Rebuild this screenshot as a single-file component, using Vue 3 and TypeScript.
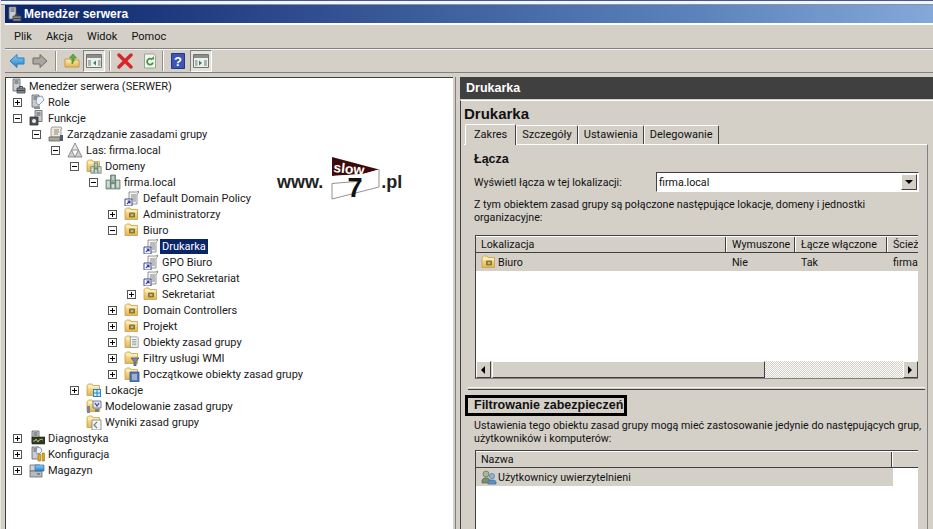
<script setup lang="ts">
type Row = { label: string; level: number; exp?: "+" | "-"; icon: string; selected?: boolean };

const rows: Row[] = [
  { label: "Menedżer serwera (SERWER)", level: 0, icon: "server" },
  { label: "Role", level: 1, exp: "+", icon: "roles" },
  { label: "Funkcje", level: 1, exp: "-", icon: "features" },
  { label: "Zarządzanie zasadami grupy", level: 2, exp: "-", icon: "scroll" },
  { label: "Las: firma.local", level: 3, exp: "-", icon: "forest" },
  { label: "Domeny", level: 4, exp: "-", icon: "domains" },
  { label: "firma.local", level: 5, exp: "-", icon: "domain" },
  { label: "Default Domain Policy", level: 6, icon: "gpo" },
  { label: "Administratorzy", level: 6, exp: "+", icon: "ou" },
  { label: "Biuro", level: 6, exp: "-", icon: "ou" },
  { label: "Drukarka", level: 7, icon: "gpo", selected: true },
  { label: "GPO Biuro", level: 7, icon: "gpo" },
  { label: "GPO Sekretariat", level: 7, icon: "gpo" },
  { label: "Sekretariat", level: 7, exp: "+", icon: "ou" },
  { label: "Domain Controllers", level: 6, exp: "+", icon: "ou" },
  { label: "Projekt", level: 6, exp: "+", icon: "ou" },
  { label: "Obiekty zasad grupy", level: 6, exp: "+", icon: "gpofolder" },
  { label: "Filtry usługi WMI", level: 6, exp: "+", icon: "wmi" },
  { label: "Początkowe obiekty zasad grupy", level: 6, exp: "+", icon: "starter" },
  { label: "Lokacje", level: 4, exp: "+", icon: "sites" },
  { label: "Modelowanie zasad grupy", level: 4, icon: "modeling" },
  { label: "Wyniki zasad grupy", level: 4, icon: "results" },
  { label: "Diagnostyka", level: 1, exp: "+", icon: "diag" },
  { label: "Konfiguracja", level: 1, exp: "+", icon: "config" },
  { label: "Magazyn", level: 1, exp: "+", icon: "storage" },
];

const menu = ["Plik", "Akcja", "Widok", "Pomoc"];
const tabs = ["Zakres", "Szczegóły", "Ustawienia", "Delegowanie"];
const columns = [
  { name: "Lokalizacja", width: 250 },
  { name: "Wymuszone", width: 68 },
  { name: "Łącze włączone", width: 91 },
  { name: "Ścieżka", width: 60 },
];

const indent = (level: number) => (level ? level * 19 - 12 : 4) + "px";
</script>

<template>
  <div class="window">
    <svg class="defs" width="0" height="0" aria-hidden="true">
      <defs>
        <linearGradient id="fold" x1="0" y1="0" x2="0" y2="1">
          <stop offset="0" stop-color="#fdf0b0" />
          <stop offset="1" stop-color="#e3b552" />
        </linearGradient>
        <linearGradient id="blue" x1="0" y1="0" x2="0" y2="1">
          <stop offset="0" stop-color="#8fd0f5" />
          <stop offset="1" stop-color="#1f7fd0" />
        </linearGradient>
        <symbol id="tower" viewBox="0 0 16 16">
          <path d="M3 1h7v12H3z" fill="#c9ccd0" stroke="#5d6268" stroke-width=".8" />
          <path d="M4.500 3h4M4.500 5h4" stroke="#4e545a" />
        </symbol>
        <symbol id="folder" viewBox="0 0 16 16">
          <path d="M1 13.500V3.500L2.500 2H6l1 1.500h6.500V13.500z" fill="url(#fold)" stroke="#c79f4a" stroke-width=".8" />
          <path d="M2 5h11" stroke="#fff6cf" />
        </symbol>
        <symbol id="page" viewBox="0 0 16 16">
          <path d="M5 1h8l1 1v11H5z" fill="#f6f6f2" stroke="#7d8188" stroke-width=".8" />
          <path d="M7 4h5M7 6h5M7 8h5M7 10h5" stroke="#8d9096" />
        </symbol>
        <symbol id="server" viewBox="0 0 16 16">
          <use href="#tower" width="16" height="16" />
          <path d="M7 10h8v5H7z" fill="#7f868c" stroke="#3f4448" stroke-width=".8" />
          <path d="M9.500 10V8.500h3V10M7 12.500h8" fill="none" stroke="#3f4448" />
        </symbol>
        <symbol id="roles" viewBox="0 0 16 16">
          <use href="#tower" width="16" height="16" />
          <path d="M8 3l5-1 2 4-5 5-3-2z" fill="#eef2f8" stroke="#7d8aa8" stroke-width=".8" />
          <path d="M5 13h6v2H5z" fill="#8a8f94" />
        </symbol>
        <symbol id="features" viewBox="0 0 16 16">
          <path d="M6 0.500h7v11H6z" fill="#c9ccd0" stroke="#5d6268" stroke-width=".8" />
          <path d="M7.500 3h4M7.500 5h4" stroke="#4e545a" />
          <path d="M1 7h8v8H1z" fill="#4f5357" stroke="#2e3134" stroke-width=".8" />
          <circle cx="5" cy="11" r="2" fill="#eee" />
        </symbol>
        <symbol id="scroll" viewBox="0 0 16 16">
          <path d="M4 1h9l1 1.500-1 .5v8H3V3z" fill="#efe9d8" stroke="#8c8a80" stroke-width=".8" />
          <path d="M6 4h5M6 6h5M6 8h4" stroke="#8a8a84" />
          <path d="M1 11h11v4H1z" fill="#a9a69c" stroke="#676660" stroke-width=".8" />
          <path d="M12 9h3v6h-3z" fill="#4b5a72" />
        </symbol>
        <symbol id="forest" viewBox="0 0 16 16">
          <path d="M8 1l3.500 7h-7z" fill="#e6e6e6" stroke="#777" stroke-width=".8" />
          <path d="M4.500 8L8 15H1z" fill="#cfcfcf" stroke="#777" stroke-width=".8" />
          <path d="M11.500 8L15 15H8z" fill="#cfcfcf" stroke="#777" stroke-width=".8" />
        </symbol>
        <symbol id="domainMark" viewBox="0 0 16 16">
          <path d="M5.500 1h5v8h-5z" fill="#8fa89a" stroke="#54705f" stroke-width=".7" />
          <path d="M1 6h4.500v9H1zM10.500 6H15v9h-4.500z" fill="#a9c2b2" stroke="#54705f" stroke-width=".7" />
          <path d="M6 9.500h4v5.500H6z" fill="#c2d4c8" stroke="#54705f" stroke-width=".7" />
          <path d="M2 8h2.500M2 10h2.500M2 12h2.500M11.500 8H14M11.500 10H14M11.500 12H14M7 3h2M7 5h2M7 12h2" stroke="#eef4f0" />
        </symbol>
        <symbol id="domains" viewBox="0 0 16 16">
          <use href="#folder" width="16" height="16" />
          <use href="#domainMark" x="4" y="4" width="12" height="12" />
        </symbol>
        <symbol id="domain" viewBox="0 0 16 16">
          <use href="#domainMark" width="16" height="16" />
        </symbol>
        <symbol id="gpo" viewBox="0 0 16 16">
          <path d="M5 2h8l1.500-1v2L13 4v10H5z" fill="#f4f4f0" stroke="#7b7e85" stroke-width=".8" />
          <path d="M7 5h5M7 7h5M7 9h5M9 11h3" stroke="#7f8289" />
          <path d="M1 9h7v7H1z" fill="#fff" stroke="#3a4a86" />
          <path d="M3 14l3-3M3.500 11H6v2.500" fill="none" stroke="#2a3a9c" stroke-width="1.100" />
        </symbol>
        <symbol id="ou" viewBox="0 0 16 16">
          <use href="#folder" width="16" height="16" />
          <path d="M5.500 7h5v4h-5z" fill="#9b8b3c" stroke="#6a5e28" stroke-width=".7" />
          <path d="M7 9h2" stroke="#f3ecb6" />
        </symbol>
        <symbol id="gpofolder" viewBox="0 0 16 16">
          <use href="#folder" width="16" height="16" />
          <use href="#page" y="2" width="14" height="14" x="2" />
        </symbol>
        <symbol id="wmi" viewBox="0 0 16 16">
          <use href="#folder" width="16" height="16" />
          <path d="M7 8h8l-3 3.500V16H10v-4.500z" fill="#7a8ba8" stroke="#465774" stroke-width=".8" />
        </symbol>
        <symbol id="starter" viewBox="0 0 16 16">
          <use href="#folder" width="16" height="16" />
          <path d="M6 6h9v10H6z" fill="#5479b4" stroke="#33507e" stroke-width=".8" />
          <path d="M8 9h5M8 11h5M8 13h5" stroke="#e4ecf7" />
        </symbol>
        <symbol id="sites" viewBox="0 0 16 16">
          <use href="#folder" width="16" height="16" />
          <path d="M7 7h8v8H7z" fill="#1f86cf" />
          <path d="M8 8h2.500v2.500H8zM11.500 8H14v2.500h-2.500zM8 11.500h2.500V14H8zM11.500 11.500H14V14h-2.500z" fill="#cfeafb" />
        </symbol>
        <symbol id="modeling" viewBox="0 0 16 16">
          <use href="#folder" width="16" height="16" />
          <path d="M7 3h8v7H7z" fill="#dfe5ee" stroke="#5c6a82" stroke-width=".8" />
          <path d="M9 5l2 3 2-3" fill="none" stroke="#3a3fa0" stroke-width="1.200" />
          <path d="M1 8h3v7H1z" fill="#808488" />
          <path d="M9 11h4v3H9z" fill="#7d8086" />
        </symbol>
        <symbol id="results" viewBox="0 0 16 16">
          <use href="#folder" width="16" height="16" />
          <path d="M6 6h9v10H6z" fill="#f4f4f2" stroke="#7c8086" stroke-width=".8" />
          <path d="M11 8L8 11l3 3" fill="none" stroke="#5e8478" stroke-width="1.100" />
        </symbol>
        <symbol id="diag" viewBox="0 0 16 16">
          <use href="#tower" width="16" height="16" />
          <path d="M3 7h13v7H3z" fill="#33382c" stroke="#1e211a" stroke-width=".6" />
          <path d="M4 11h2l1-2 2 3 1-2h1l1-1 2 1" fill="none" stroke="#b5d660" stroke-width=".9" />
        </symbol>
        <symbol id="config" viewBox="0 0 16 16">
          <use href="#tower" width="16" height="16" />
          <path d="M8 1l4 1 1 3-3 3-3-1z" fill="#eef2f8" stroke="#7d8aa8" stroke-width=".8" />
          <path d="M9 8h2.500v7H9zM13 7h2.500v8H13z" fill="#e2a81f" stroke="#96701b" stroke-width=".6" />
        </symbol>
        <symbol id="storage" viewBox="0 0 16 16">
          <path d="M1 3h10v6H1z" fill="#d0d3d6" stroke="#64696e" stroke-width=".8" />
          <path d="M1 9h12v6H1z" fill="#b7bbbf" stroke="#64696e" stroke-width=".8" />
          <path d="M6 3h9v6H6z" fill="url(#blue)" stroke="#3b6f9c" stroke-width=".7" />
          <path d="M8 12h3" stroke="#4a4e52" />
        </symbol>
        <symbol id="users" viewBox="0 0 16 16">
          <circle cx="5" cy="5" r="3" fill="#a8b69a" stroke="#5f6e55" stroke-width=".7" />
          <path d="M1 14v-3l2-2h4l2 2v3z" fill="#7b8f6f" stroke="#55654b" stroke-width=".7" />
          <circle cx="11" cy="7" r="2.600" fill="#8fb4d8" stroke="#4f7aa3" stroke-width=".7" />
          <path d="M7 15v-2.500L9 11h4l2 1.500V15z" fill="#5d8fc4" stroke="#3f6a99" stroke-width=".7" />
        </symbol>
      </defs>
    </svg>

    <div class="frame-top" />
    <div class="titlebar">
      <svg class="ic"><use href="#server" width="16" height="16" /></svg>
      <span>Menedżer serwera</span>
    </div>

    <nav class="menu">
      <span v-for="item in menu" :key="item">{{ item }}</span>
    </nav>

    <div class="toolbar">
      <svg class="tool back" viewBox="0 0 16 16">
        <path d="M1 8l7-6.500V5h7v6H8v3.500z" fill="url(#blue)" stroke="#2f7fbf" />
      </svg>
      <svg class="tool fwd" viewBox="0 0 16 16">
        <path d="M15 8L8 1.500V5H1v6h7v3.500z" fill="#a9a79f" stroke="#6f6d67" />
      </svg>
      <i class="sep first" />
      <svg class="tool up" viewBox="0 0 16 16">
        <path d="M1 14V6h5l1 1h8v7z" fill="url(#fold)" stroke="#c69a45" />
        <path d="M8 11V5L5.500 5 9 1l3.500 4H10v3z" fill="#5fae3c" stroke="#3e8426" stroke-width=".6" />
      </svg>
      <span class="pressed">
        <svg width="16" height="14" viewBox="0 0 16 14">
          <path d="M.5.500h15v13H.5z" fill="#eef0ea" stroke="#70746e" />
          <path d="M1 1h14v3H1z" fill="#8a8d88" />
          <path d="M2 6h3v6H2zM12 6h2.500v6H12z" fill="#a9b4b0" />
          <path d="M10 6.500L7 9l3 2.500z" fill="#3f7e6e" />
        </svg>
      </span>
      <i class="sep" />
      <svg class="tool del" viewBox="0 0 16 16">
        <path d="M2 2l12 12M14 2L2 14" stroke="#d8252a" stroke-width="3.400" stroke-linecap="round" />
      </svg>
      <svg class="tool refresh" viewBox="0 0 16 16">
        <path d="M2.500 1h9l2 2v12h-11z" fill="#f4f6ee" stroke="#9aa29a" />
        <path d="M11 9.500a3 3 0 1 1-.8-3" fill="none" stroke="#3f9b3f" stroke-width="1.800" />
        <path d="M8.500 6.500h3.500V3z" fill="#3f9b3f" />
      </svg>
      <i class="sep" />
      <svg class="tool help" viewBox="0 0 16 16">
        <path d="M1.500.500h13v15h-13z" fill="#3b55b8" stroke="#26397f" />
        <text x="8" y="13" text-anchor="middle" font-size="13" font-weight="700" fill="#fff" font-family="Liberation Sans, sans-serif">?</text>
      </svg>
      <span class="pressed second">
        <svg width="16" height="14" viewBox="0 0 16 14">
          <path d="M.5.500h15v13H.5z" fill="#eef0ea" stroke="#70746e" />
          <path d="M1 1h14v3H1z" fill="#8a8d88" />
          <path d="M2 6h2.500v6H2zM11 6h3v6h-3z" fill="#a9b4b0" />
          <path d="M6 6.500L9 9l-3 2.500z" fill="#3f7e6e" />
        </svg>
      </span>
    </div>

    <main class="main">
      <section class="tree">
        <div
          v-for="row in rows"
          :key="row.label"
          class="row"
          :style="{ paddingLeft: indent(row.level) }"
        >
          <span v-if="row.level" class="slot">
            <b v-if="row.exp" class="exp" :class="{ plus: row.exp === '+' }" />
          </span>
          <svg class="ic"><use :href="'#' + row.icon" width="16" height="16" /></svg>
          <span class="label" :class="{ sel: row.selected }">{{ row.label }}</span>
        </div>

        <div class="logo">
          <span class="logo-txt">www.</span>
          <svg class="logo-flag" width="50" height="48" viewBox="0 0 50 48">
            <path d="M1 1l47 12.500L32 18 1 20z" fill="#3c0a0a" />
            <text x="2" y="16" font-size="14" font-weight="700" fill="#fff" font-family="Liberation Sans, sans-serif" transform="rotate(6 2 16)">slow</text>
            <path d="M1 20l31-2 16-4.500v18L1 44z" fill="#fff" />
            <path d="M1 27.500V43L48 31V13" fill="none" stroke="#777" stroke-width=".8" />
            <path d="M1 27.500l30-2.500" fill="none" stroke="#777" stroke-width=".8" />
            <text x="24" y="41" font-size="27" font-weight="700" fill="#111" text-anchor="middle" font-family="Liberation Sans, sans-serif">7</text>
          </svg>
          <span class="logo-txt">.pl</span>
        </div>
      </section>

      <section class="side">
        <header class="side-head">Drukarka</header>
        <div class="pane">
          <h1>Drukarka</h1>
          <div class="tabs">
            <span v-for="(t, i) in tabs" :key="t" class="tab" :class="{ active: i === 0 }">{{ t }}</span>
          </div>
          <div class="page">
            <h2>Łącza</h2>
            <div class="combo-row">
              <span>Wyświetl łącza w tej lokalizacji:</span>
              <div class="combo">
                <span>firma.local</span>
                <i class="drop" />
              </div>
            </div>
            <p class="para">Z tym obiektem zasad grupy są połączone następujące lokacje, domeny i jednostki organizacyjne:</p>

            <div class="list top">
              <div class="list-head">
                <span v-for="c in columns" :key="c.name" class="col" :style="{ flexBasis: c.width + 'px' }">{{ c.name }}</span>
              </div>
              <div class="list-row">
                <span class="col" :style="{ flexBasis: columns[0].width + 1 + 'px' }">
                  <svg class="ic small"><use href="#ou" width="16" height="16" /></svg>Biuro
                </span>
                <span class="col" :style="{ flexBasis: columns[1].width + 1 + 'px' }">Nie</span>
                <span class="col" :style="{ flexBasis: columns[2].width + 1 + 'px' }">Tak</span>
                <span class="col" :style="{ flexBasis: columns[3].width + 'px' }">firma.local</span>
              </div>
              <div class="list-fill" />
              <div class="hscroll">
                <i class="sbtn left" />
                <i class="thumb" />
                <i class="hatch" />
                <i class="sbtn right" />
              </div>
            </div>

            <div class="divider" />

            <h2 class="boxed">Filtrowanie zabezpieczeń</h2>
            <p class="para second">Ustawienia tego obiektu zasad grupy mogą mieć zastosowanie jedynie do następujących grup, użytkowników i komputerów:</p>

            <div class="list bottom">
              <div class="list-head">
                <span class="col" style="flex-basis: 416px">Nazwa</span>
                <span class="col" style="flex-basis: 26px" />
              </div>
              <div class="list-row" style="width: 417px">
                <span class="col">
                  <svg class="ic small"><use href="#users" width="16" height="16" /></svg>Użytkownicy uwierzytelnieni
                </span>
              </div>
              <div class="list-fill" />
            </div>
          </div>
        </div>
      </section>
    </main>
  </div>
</template>

<style>
html,
body {
  margin: 0;
  overflow: hidden;
  background: #d4d0c8;
}
</style>

<style scoped>
.window {
  width: 933px;
  height: 529px;
  overflow: hidden;
  display: flex;
  flex-direction: column;
  background: #d4d0c8;
  font: 11px Roboto, "Liberation Sans", Arial, sans-serif;
  color: #111;
  border-left: 1px solid #e8e6e0;
  box-sizing: border-box;
  padding-left: 3px;
}
.defs {
  position: absolute;
}
.ic {
  width: 16px;
  height: 16px;
  flex: none;
}
.frame-top {
  height: 5px;
  flex: none;
  margin-left: -4px;
  box-sizing: border-box;
  border-top: 1px solid #3f5c8f;
  border-bottom: 1px solid #8f8fa8;
  background: #f2f4f6;
}
.titlebar {
  height: 18px;
  flex: none;
  display: flex;
  align-items: center;
  gap: 2px;
  margin-left: 1px;
  padding-left: 1px;
  background: linear-gradient(90deg, #0a246a 0%, #2c4a8c 30%, #5c84bc 75%, #84a8d8 100%);
  color: #fff;
  font: 700 12px "Liberation Sans", sans-serif;
}
.menu {
  height: 26px;
  flex: none;
  display: flex;
  align-items: center;
  box-sizing: border-box;
  margin-left: 1px;
  padding-left: 9px;
  gap: 14px;
  border-top: 2px solid #fff;
  border-bottom: 1px solid #808080;
}
.toolbar {
  height: 24px;
  flex: none;
  display: flex;
  align-items: center;
  box-sizing: border-box;
  margin-left: 1px;
  padding-left: 4px;
  border-top: 1px solid #f4f2ee;
  border-bottom: 1px solid #808080;
}
.tool {
  width: 16px;
  height: 16px;
  flex: none;
}
.fwd {
  margin-left: 7px;
}
.sep {
  width: 1px;
  height: 20px;
  background: #8f8f8a;
  border-right: 1px solid #fff;
  margin: 0 6px 0 4px;
  flex: none;
}
.sep.first {
  margin: 0 7px;
}
.up {
  margin-right: 3px;
}
.pressed {
  width: 22px;
  height: 22px;
  flex: none;
  display: flex;
  align-items: center;
  justify-content: center;
  box-sizing: border-box;
  background: #e4e2dc;
  border: 1px solid;
  border-color: #808080 #fff #fff #808080;
}
.pressed.second {
  margin-left: 4px;
}
.refresh {
  margin-left: 9px;
}
.main {
  flex: 1;
  min-height: 0;
  display: flex;
  margin-top: 4px;
  margin-left: 1px;
}
.tree {
  position: relative;
  width: 448px;
  flex: none;
  background: #fff;
  border-top: 1px solid #404040;
  border-left: 1px solid #404040;
  box-sizing: border-box;
  color: #1a1a1a;
}
.row {
  height: 16px;
  display: flex;
  align-items: center;
  white-space: nowrap;
}
.slot {
  width: 16px;
  flex: none;
  display: flex;
}
.exp {
  position: relative;
  width: 9px;
  height: 9px;
  box-sizing: border-box;
  border: 1px solid #555;
  background: #fff;
}
.exp::before {
  content: "";
  position: absolute;
  left: 1px;
  top: 3px;
  width: 5px;
  height: 1px;
  background: #000;
}
.exp.plus::after {
  content: "";
  position: absolute;
  left: 3px;
  top: 1px;
  width: 1px;
  height: 5px;
  background: #000;
}
.label {
  margin-left: 1px;
  padding: 0 2px;
  height: 15px;
  line-height: 15px;
}
.label.sel {
  background: #0a246a;
  color: #fff;
}
.logo {
  position: absolute;
  left: 271px;
  top: 78px;
  display: flex;
  align-items: flex-start;
  height: 48px;
}
.logo-flag {
  margin-left: 8px;
  flex: none;
}
.logo-txt {
  font: 700 18px "Liberation Sans", sans-serif;
  line-height: 20px;
  color: #222;
  margin-top: 16px;
}
.side {
  flex: 1;
  min-width: 0;
  margin-left: 2px;
  border-left: 1px solid #808080;
  padding-left: 4px;
  display: flex;
  flex-direction: column;
}
.side-head {
  height: 22px;
  flex: none;
  background: #404040;
  color: #fff;
  font: 700 12.5px/22px "Liberation Sans", sans-serif;
  padding-left: 6px;
}
.pane {
  flex: 1;
  min-height: 0;
  margin-top: 1px;
  border-top: 1px solid #fff;
  border-left: 1px solid #404040;
  padding: 4px 0 0 3px;
}
h1 {
  margin: 0;
  font: 700 15px/18px "Liberation Sans", sans-serif;
  color: #111;
}
.tabs {
  display: flex;
  height: 20px;
  align-items: flex-end;
  margin-top: 1px;
  padding-left: 1px;
}
.tab {
  height: 18px;
  line-height: 18px;
  padding: 0 5px;
  border: 1px solid;
  border-bottom: none;
  border-color: #fff #404040 transparent #fff;
  border-radius: 2px 2px 0 0;
  white-space: nowrap;
}
.tab.active {
  height: 20px;
  line-height: 20px;
  padding: 0 8px;
  position: relative;
  top: 1px;
  background: #d4d0c8;
}
.page {
  width: 464px;
  box-sizing: border-box;
  border-top: 1px solid #fff;
  border-right: 1px solid #808080;
  padding: 7px 0 0 10px;
  height: 400px;
  font-size: 10.7px;
}
h2 {
  margin: 0;
  font: 700 12.5px/14px "Liberation Sans", sans-serif;
}
.combo-row {
  display: flex;
  align-items: center;
  justify-content: space-between;
  width: 445px;
  margin-top: 6px;
  height: 20px;
}
.combo {
  width: 263px;
  height: 20px;
  box-sizing: border-box;
  border: 1px solid;
  border-color: #404040 #fff #fff #404040;
  background: #fff;
  display: flex;
  align-items: center;
  justify-content: space-between;
  padding-left: 2px;
}
.drop {
  width: 16px;
  height: 16px;
  margin-right: 1px;
  box-sizing: border-box;
  background: #d4d0c8;
  border: 1px solid;
  border-color: #fff #404040 #404040 #fff;
  position: relative;
}
.drop::after {
  content: "";
  position: absolute;
  left: 3px;
  top: 5px;
  border: 4px solid transparent;
  border-top: 4px solid #000;
  border-bottom: none;
}
.para {
  margin: 6px 0 0;
  width: 420px;
  line-height: 13px;
}
.para.second {
  margin-top: 3px;
  width: 450px;
}
.list {
  width: 443px;
  margin-left: 1px;
  box-sizing: border-box;
  border-top: 1px solid #404040;
  border-left: 1px solid #404040;
  background: #fff;
  display: flex;
  flex-direction: column;
  overflow: hidden;
}
.list.top {
  height: 144px;
  margin-top: 11px;
  border-bottom: 1px solid #808080;
}
.list.bottom {
  height: 90px;
  margin-top: 5px;
}
.list-head {
  display: flex;
  height: 17px;
  box-sizing: border-box;
  flex: none;
  background: #d4d0c8;
  border-top: 1px solid #fff;
  border-bottom: 1px solid #404040;
}
.col {
  flex: none;
  display: flex;
  align-items: center;
  box-sizing: border-box;
  padding-left: 5px;
  white-space: nowrap;
  overflow: hidden;
}
.list-head .col {
  border-right: 1px solid #404040;
  box-shadow: 1px 0 0 #fff;
  margin-right: 1px;
}
.list-row {
  display: flex;
  height: 18px;
  flex: none;
  background: #d4d0c8;
}
.small {
  margin-right: 1px;
}
.list-fill {
  flex: 1;
}
.hscroll {
  height: 17px;
  flex: none;
  display: flex;
  background: #d4d0c8;
}
.sbtn {
  width: 15px;
  flex: none;
  position: relative;
  box-sizing: border-box;
  background: #d4d0c8;
  border: 1px solid;
  border-color: #fff #404040 #404040 #fff;
}
.sbtn::after {
  content: "";
  position: absolute;
  top: 4px;
  left: 4px;
  border: 4px solid transparent;
}
.sbtn.left::after {
  border-right: 4px solid #000;
  border-left: none;
}
.sbtn.right::after {
  border-left: 4px solid #000;
  border-right: none;
}
.thumb {
  width: 273px;
  flex: none;
  box-sizing: border-box;
  margin-left: 1px;
  border: 1px solid;
  border-color: #fff #404040 #404040 #fff;
  background: #d4d0c8;
}
.hatch {
  flex: 1;
  background: repeating-conic-gradient(#d4d0c8 0 25%, #fff 0 50%) 0 0 / 2px 2px;
}
.divider {
  width: 457px;
  margin: 8px 0 0 -6px;
  height: 3px;
  box-sizing: border-box;
  border-top: 1px solid #f4f2ee;
  border-bottom: 1px solid #404040;
}
.boxed {
  width: 162px;
  height: 21px;
  line-height: 15px;
  box-sizing: border-box;
  border: 3px solid #000;
  margin: 5px 0 0 -9px;
  padding-left: 6px;
  white-space: nowrap;
}
</style>
